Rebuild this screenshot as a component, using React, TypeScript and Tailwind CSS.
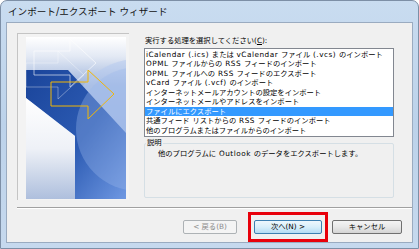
import React from "react";

const items = [
  "iCalendar (.ics) または vCalendar ファイル (.vcs) のインポート",
  "OPML ファイルからの RSS フィードのインポート",
  "OPML ファイルへの RSS フィードのエクスポート",
  "vCard ファイル (.vcf) のインポート",
  "インターネットメールアカウントの設定をインポート",
  "インターネットメールやアドレスをインポート",
  "ファイルにエクスポート",
  "共通フィード リストからの RSS フィードのインポート",
  "他のプログラムまたはファイルからのインポート",
];

const font = { fontFamily: "'DejaVu Sans', 'Noto Sans CJK JP', sans-serif" };

// ASCII runs are set a little wider, like the bitmap UI font of the original
function Mixed({ text }: { text: string }) {
  const parts = text.split(/([\x20-\x7e]+)/).filter(Boolean);
  return (
    <>
      {parts.map((p, i) =>
        /^[\x20-\x7e]+$/.test(p) ? (
          <span key={i} className="tracking-[0.5px]">
            {p}
          </span>
        ) : (
          <span key={i}>{p}</span>
        )
      )}
    </>
  );
}

function WizardArt() {
  return (
    <svg width="100" height="162" viewBox="0 0 100 162">
      <defs>
        <linearGradient id="sky" x1="0" y1="0" x2="0" y2="1">
          <stop offset="0" stopColor="#ffffff" />
          <stop offset="0.12" stopColor="#e3e9f4" />
          <stop offset="0.3" stopColor="#9db4dc" />
          <stop offset="1" stopColor="#7599dc" />
        </linearGradient>
        <linearGradient id="band" x1="0" y1="0" x2="1" y2="1">
          <stop offset="0" stopColor="#1a449a" />
          <stop offset="0.55" stopColor="#2c5bb3" />
          <stop offset="1" stopColor="#6f98e2" />
        </linearGradient>
        <linearGradient id="white" x1="0" y1="0" x2="0" y2="1">
          <stop offset="0" stopColor="#ffffff" />
          <stop offset="0.5" stopColor="#eef1f7" />
          <stop offset="1" stopColor="#aebfdd" />
        </linearGradient>
      </defs>
      <rect width="100" height="162" fill="url(#sky)" />
      <circle cx="112" cy="92" r="70" fill="#b7cbee" opacity="0.55" />
      <polygon points="0,33 42,33 100,96 100,162 49,162 49,99 0,61" fill="url(#band)" />
      <circle cx="112" cy="92" r="62" fill="#9cb8ea" opacity="0.35" />
      <polygon points="0,61 49,99 49,162 0,162" fill="url(#white)" />
      <g fill="none" stroke="#ffffff" strokeWidth="0.8" opacity="0.75">
        <polygon points="8,14 44,14 44,2 70,26 44,50 44,38 8,38" />
        <polygon points="0,26 32,26 32,14 58,38 32,62 32,50 0,50" opacity="0.6" />
      </g>
      <polygon
        points="25,45 62,45 62,33 88,57 62,82 62,69 25,69"
        fill="none"
        stroke="#f2b705"
        strokeWidth="1"
      />
    </svg>
  );
}

export default function App() {
  return (
    <div
      className="relative h-[249px] w-[419px] overflow-hidden rounded-t-[7px] border border-[#7d8fa6] bg-gradient-to-b from-[#c9dcf0] via-[#bcd2ea] to-[#c6d9ee] text-[#000]"
      style={font}
    >
      <div className="flex h-[21px] items-center pl-[7px] text-[9.6px] leading-none text-[#111]">
        インポート/エクスポート ウィザード
      </div>
      <div className="relative ml-[5px] flex h-[221px] w-[407px] flex-col border border-[#9aabc0] bg-[#f0f0f0]">
        <div className="flex pl-[10px] pt-[10px]">
          <div className="h-[167px] w-[112px] border-l border-t border-[#c4c4c4] bg-[#f3f3f3] pl-[8px] pt-[3px]">
            <WizardArt />
          </div>
          <div className="ml-[15px] flex flex-col pt-[3px]">
            <div className="h-[9.5px] pl-[1px] text-[7.3px] leading-[9.5px]">
              実行する処理を選択してください(<span className="underline">C</span>):
            </div>
            <div className="mt-[2.5px] h-[89px] w-[250px] border border-[#828790] bg-white pt-[0.5px]">
              {items.map((t, i) => (
                <div
                  key={t}
                  className={
                    i === 6
                      ? "h-[9.5px] whitespace-nowrap bg-[#3399ff] pl-[1px] text-[7.3px] leading-[9.5px] text-white"
                      : "h-[9.5px] whitespace-nowrap pl-[1px] text-[7.3px] leading-[9.5px]"
                  }
                >
                  <Mixed text={t} />
                </div>
              ))}
            </div>
            <div className="relative mt-[6px] h-[55px] w-[250px] rounded-[2px] border border-[#d5dfe5]">
              <span className="absolute left-[1px] top-[-6px] bg-[#f0f0f0] px-[1px] text-[7.3px] leading-[9.5px]">
                説明
              </span>
              <div className="pl-[13px] pt-[5px] text-[7.3px] leading-[9.5px]">
                <Mixed text="他のプログラムに Outlook のデータをエクスポートします。" />
              </div>
            </div>
          </div>
        </div>
        <div className="ml-[10px] mt-[7px] h-[2px] w-[395px] border-t border-b border-t-[#a0a0a0] border-b-white" />
        <div className="mt-[11px] flex justify-end pr-[10px]">
          <div className="flex h-[14px] w-[54px] items-center justify-center rounded-[2px] border border-[#adb2b5] bg-[#f4f4f4] text-[7.3px] text-[#8a8a8a]">
            &lt; 戻る(B)
          </div>
          <div className="ml-[17px] flex h-[14px] w-[68px] items-center justify-center rounded-[2px] border border-[#3c7fb1] bg-gradient-to-b from-[#eef7fd] via-[#d8effb] to-[#b4dcf4] text-[7.3px]">
            次へ(N) &gt;
          </div>
          <div className="ml-[10px] flex h-[14px] w-[70px] items-center justify-center rounded-[2px] border border-[#707070] bg-gradient-to-b from-[#f4f4f4] via-[#e8e8e8] to-[#d4d4d4] text-[7.3px]">
            キャンセル
          </div>
        </div>
        <div className="absolute left-[241px] top-[189px] h-[30px] w-[80px] border-[3px] border-[#e8000b]" />
      </div>
    </div>
  );
}
